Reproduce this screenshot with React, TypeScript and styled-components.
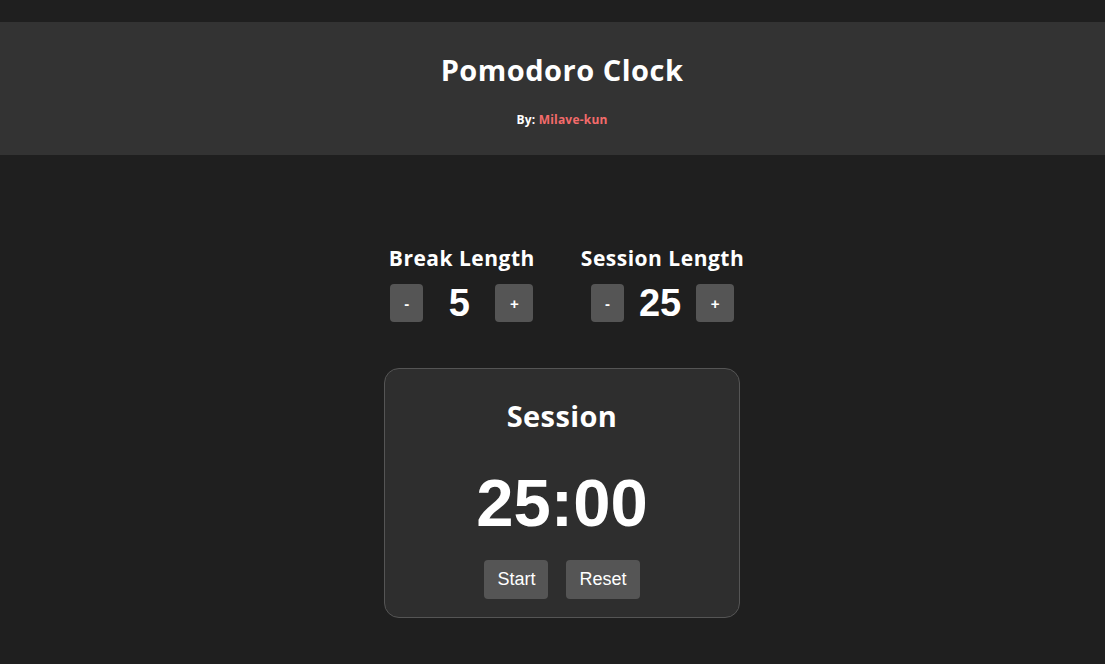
import React from "react";
import styled, { createGlobalStyle } from "styled-components";

const Global = createGlobalStyle`
  html, body { margin: 0; padding: 0; background: #1f1f1f; }
  body { font-family: "Open Sans", "Liberation Sans", sans-serif; color: #fff; }
`;

const Page = styled.div`
  padding-top: 22px;
  min-height: 664px;
  box-sizing: border-box;
`;

const Header = styled.header`
  background: #333333;
  height: 133px;
  display: flex;
  flex-direction: column;
  align-items: center;
  padding-left: 19px;
  box-sizing: border-box;
`;

const Title = styled.h1`
  margin: 30px 0 0;
  font-size: 29px;
  line-height: 36px;
  font-weight: 700;
  letter-spacing: 0.5px;
`;

const Byline = styled.p`
  margin: 24px 0 0;
  font-size: 12px;
  font-weight: 700;
  line-height: 16px;
  letter-spacing: 0.2px;
`;

const Author = styled.span`
  color: #f46b6b;
`;

const Main = styled.main`
  display: flex;
  flex-direction: column;
  align-items: center;
  padding-left: 19px;
  padding-top: 88px;
`;

const Settings = styled.div`
  display: flex;
  gap: 46px;
  padding-left: 9px;
`;

const Setting = styled.div`
  display: flex;
  flex-direction: column;
  align-items: center;
`;

const Label = styled.h2`
  margin: 0;
  font-size: 21px;
  line-height: 30px;
  font-weight: 700;
  letter-spacing: 0.5px;
`;

const Controls = styled.div`
  display: flex;
  align-items: center;
  margin-top: 11px;
`;

const StepButton = styled.button<{ $wide?: boolean }>`
  width: ${(p) => (p.$wide ? 38 : 33)}px;
  height: 38px;
  border: none;
  border-radius: 4px;
  background: #555555;
  color: #fff;
  font-family: "Liberation Sans", Arial, sans-serif;
  font-size: 15px;
  font-weight: 700;
  padding: 0;
`;

const Value = styled.span`
  width: 72px;
  text-align: center;
  font-family: "Liberation Sans", Arial, sans-serif;
  font-size: 38px;
  font-weight: 700;
  line-height: 38px;
`;

const Card = styled.section`
  margin-top: 46px;
  width: 356px;
  height: 250px;
  box-sizing: border-box;
  background: #2e2e2e;
  border: 1px solid #555;
  border-radius: 15px;
  display: flex;
  flex-direction: column;
  align-items: center;
`;

const Phase = styled.h2`
  margin: 29px 0 0;
  font-size: 29px;
  line-height: 36px;
  font-weight: 700;
  letter-spacing: 0.4px;
`;

const Time = styled.div`
  margin-top: 31px;
  font-family: "Liberation Sans", Arial, sans-serif;
  font-size: 67px;
  font-weight: 700;
  line-height: 76px;
`;

const Actions = styled.div`
  display: flex;
  gap: 18px;
  margin-top: 19px;
`;

const ActionButton = styled.button`
  height: 39px;
  padding: 0 13px;
  border: none;
  border-radius: 4px;
  background: #555555;
  color: #fff;
  font-family: "Liberation Sans", Arial, sans-serif;
  font-size: 18px;
`;

export default function App() {
  return (
    <Page>
      <Global />
      <Header>
        <Title>Pomodoro Clock</Title>
        <Byline>
          By: <Author>Milave-kun</Author>
        </Byline>
      </Header>
      <Main>
        <Settings>
          <Setting>
            <Label>Break Length</Label>
            <Controls>
              <StepButton>-</StepButton>
              <Value>5</Value>
              <StepButton $wide>+</StepButton>
            </Controls>
          </Setting>
          <Setting>
            <Label>Session Length</Label>
            <Controls>
              <StepButton>-</StepButton>
              <Value>25</Value>
              <StepButton $wide>+</StepButton>
            </Controls>
          </Setting>
        </Settings>
        <Card>
          <Phase>Session</Phase>
          <Time>25:00</Time>
          <Actions>
            <ActionButton>Start</ActionButton>
            <ActionButton>Reset</ActionButton>
          </Actions>
        </Card>
      </Main>
    </Page>
  );
}
